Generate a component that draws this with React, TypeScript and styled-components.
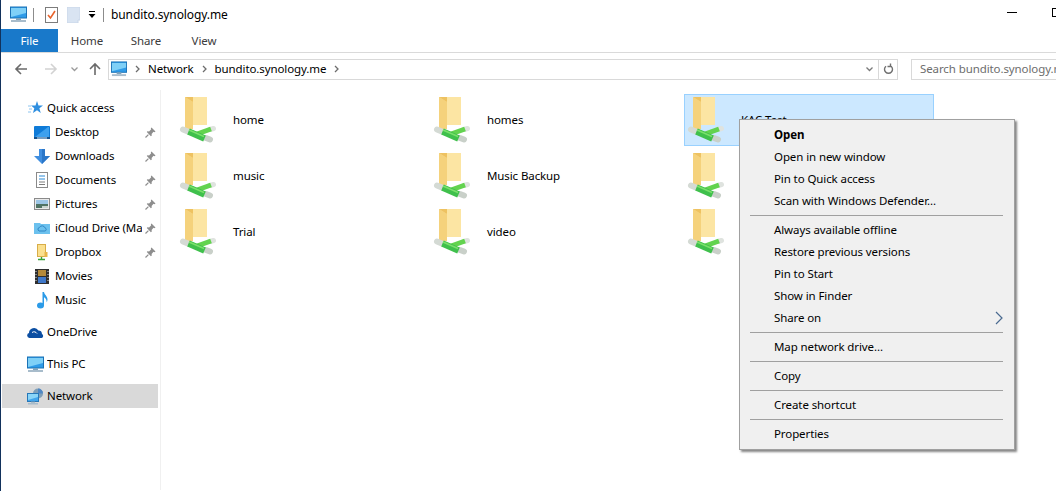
import styled, { createGlobalStyle } from "styled-components";

const GlobalStyle = createGlobalStyle`
  html, body {
    margin: 0;
    padding: 0;
    background: #ffffff;
    overflow: hidden;
  }
  * { box-sizing: border-box; }
`;

const Window = styled.div`
  position: relative;
  width: 1056px;
  height: 491px;
  overflow: hidden;
  background: #ffffff;
  border-left: 1px solid #12325c;
  color: #000000;
  font-family: "Noto Sans", "Open Sans", sans-serif;
  font-size: 11.5px;
  letter-spacing: -0.1px;
`;

const TitleBar = styled.div`
  display: flex;
  align-items: center;
  height: 29px;
  padding-left: 9px;
`;

const QuickSlot = styled.span<{ $ml: number }>`
  display: flex;
  margin-left: ${(p) => p.$ml}px;
`;

const TitleRule = styled.span<{ $ml: number }>`
  width: 1px;
  height: 14px;
  margin-left: ${(p) => p.$ml}px;
  background: #8c8c8c;
`;

const TitleText = styled.span`
  margin-left: 7px;
  padding-bottom: 1px;
  font-size: 12px;
`;

const WindowButtons = styled.div`
  display: flex;
  align-items: flex-start;
  margin-left: auto;
  height: 100%;
  padding-top: 12px;
`;

const MinimizeMark = styled.span`
  width: 10px;
  height: 1px;
  background: #000000;
`;

const MaximizeMark = styled.span`
  width: 10px;
  height: 9px;
  margin-left: 35px;
  margin-right: -6px;
  margin-top: -4px;
  border: 1px solid #000000;
`;

const Ribbon = styled.div`
  display: flex;
  height: 24px;
  border-bottom: 1px solid #dadada;
`;

const RibbonTab = styled.div<{ $active?: boolean; $width: number }>`
  width: ${(p) => p.$width}px;
  height: 23px;
  line-height: 23px;
  text-align: center;
  color: ${(p) => (p.$active ? "#ffffff" : "#3c3c3c")};
  background: ${(p) => (p.$active ? "#1979ca" : "transparent")};
`;

const NavRow = styled.div`
  display: flex;
  align-items: center;
  height: 37px;
  padding: 0 0 5px 13px;
`;

const NavButton = styled.span<{ $ml?: number }>`
  display: flex;
  margin-left: ${(p) => p.$ml ?? 0}px;
`;

const AddressBox = styled.div`
  display: flex;
  flex: none;
  align-items: center;
  width: 790px;
  height: 21px;
  margin-left: 6px;
  padding-left: 2px;
  border: 1px solid #d9d9d9;
`;

const CrumbIcon = styled.span`
  display: flex;
  margin-right: 8px;
`;

const Crumb = styled.span`
  margin: 0 8px;
  padding-bottom: 1px;
  white-space: nowrap;
`;

const AddressEnd = styled.div`
  display: flex;
  align-items: center;
  margin-left: auto;
  height: 100%;
`;

const RefreshCell = styled.span`
  display: flex;
  align-items: center;
  justify-content: center;
  width: 19px;
  height: 100%;
  margin-left: 5px;
  border-left: 1px solid #d9d9d9;
`;

const SearchBox = styled.div`
  flex: none;
  width: 160px;
  height: 21px;
  margin-left: 13px;
  padding-left: 8px;
  line-height: 18px;
  white-space: nowrap;
  color: #6d6d6d;
  border: 1px solid #d9d9d9;
`;

const Main = styled.div`
  display: flex;
  height: 400px;
`;

const Sidebar = styled.nav`
  flex: none;
  width: 160px;
  padding: 6px 0 0 1px;
  border-right: 1px solid #f0f0f0;
`;

const NavGroup = styled.div`
  margin-bottom: 8px;
`;

const TreeRow = styled.div<{ $child?: boolean; $selected?: boolean }>`
  display: flex;
  align-items: center;
  width: 156px;
  height: 24px;
  padding-left: ${(p) => (p.$child ? 31 : 25)}px;
  background: ${(p) => (p.$selected ? "#d9d9d9" : "transparent")};
`;

const TreeIcon = styled.span<{ $child?: boolean }>`
  display: flex;
  flex: none;
  justify-content: center;
  width: ${(p) => (p.$child ? 18 : 17)}px;
  margin-right: ${(p) => (p.$child ? 4 : 3)}px;
`;

const TreeLabel = styled.span`
  flex: 1;
  min-width: 0;
  padding-bottom: 1px;
  overflow: hidden;
  white-space: nowrap;
`;

const PinSlot = styled.span`
  display: flex;
  flex: none;
  margin: 0 2px 0 3px;
`;

const FileGrid = styled.section`
  display: grid;
  grid-template-columns: repeat(3, 250px);
  grid-auto-rows: 52px;
  gap: 4px;
  padding: 4px 0 0 15px;
`;

const Tile = styled.div<{ $selected?: boolean }>`
  display: flex;
  align-items: center;
  gap: 6px;
  padding-bottom: 1px;
  border: 1px solid ${(p) => (p.$selected ? "#99d1ff" : "transparent")};
  background: ${(p) => (p.$selected ? "#cce8ff" : "transparent")};
`;

const ContextMenu = styled.ul`
  position: absolute;
  left: 738px;
  top: 119px;
  width: 276px;
  height: 331px;
  margin: 0;
  padding: 4px 11px 0 10px;
  list-style: none;
  background: #f0f0f0;
  border: 1px solid #a0a0a0;
  box-shadow: 2px 2px 2px rgba(70, 70, 70, 0.65);
`;

const MenuItem = styled.li<{ $bold?: boolean }>`
  display: flex;
  align-items: center;
  justify-content: space-between;
  height: 22px;
  padding: 0 0 1px 24px;
  font-weight: ${(p) => (p.$bold ? 700 : 400)};
`;

const MenuRule = styled.li`
  height: 1px;
  margin: 3px 0 3px;
  background: #a0a0a0;
`;

const Monitor = ({ size = 17 }: { size?: number }) => (
  <svg width={size} height={size} viewBox="0 0 17 17">
    <rect x="0.5" y="1" width="16" height="11" fill="#2f9be8" stroke="#1b72b5" />
    <path d="M1 2h15v5L1 11z" fill="#7fd0f7" />
    <rect x="6" y="12" width="5" height="2" fill="#7fa3bd" />
    <rect x="1" y="14" width="15" height="2" fill="#a8bccb" />
  </svg>
);

const ClipboardCheck = () => (
  <svg width="13" height="16" viewBox="0 0 13 16">
    <rect x="0.5" y="0.5" width="12" height="15" fill="#ffffff" stroke="#7c7c7c" />
    <path d="M3 8l2.5 3L10 4" fill="none" stroke="#e8622a" strokeWidth="1.6" />
  </svg>
);

const PageBlank = () => (
  <svg width="13" height="16" viewBox="0 0 13 16">
    <path d="M0 0h13v13h-2v3H0z" fill="#d9e4f2" stroke="#c9d6e8" />
  </svg>
);

const DropLine = () => (
  <svg width="8" height="8" viewBox="0 0 8 8">
    <rect x="1" y="0" width="6" height="1" fill="#000000" />
    <path d="M0.5 3h7L4 7z" fill="#000000" />
  </svg>
);

const ArrowLeft = ({ color }: { color: string }) => (
  <svg width="14" height="14" viewBox="0 0 14 14">
    <path d="M13 7H2M7 2L2 7l5 5" fill="none" stroke={color} strokeWidth="1.6" />
  </svg>
);

const ArrowRight = ({ color }: { color: string }) => (
  <svg width="14" height="14" viewBox="0 0 14 14">
    <path d="M1 7h11M7 2l5 5-5 5" fill="none" stroke={color} strokeWidth="1.6" />
  </svg>
);

const ArrowUp = () => (
  <svg width="14" height="14" viewBox="0 0 14 14">
    <path d="M7 13V2M2 7l5-5 5 5" fill="none" stroke="#6a6a6a" strokeWidth="1.6" />
  </svg>
);

const SmallDown = ({ color = "#8f8f8f", w = 7 }: { color?: string; w?: number }) => (
  <svg width={w} height="6" viewBox="0 0 7 6">
    <path d="M0.5 1.5L3.5 4.5l3-3" fill="none" stroke={color} strokeWidth="1.3" />
  </svg>
);

const CrumbArrow = () => (
  <svg width="5" height="8" viewBox="0 0 5 8">
    <path d="M1 1l3 3-3 3" fill="none" stroke="#6d6d6d" strokeWidth="1.3" />
  </svg>
);

const Refresh = () => (
  <svg width="11" height="12" viewBox="0 0 11 12">
    <path d="M3 3.2a4 4 0 1 0 5 0M3.5 0.5v3h3" fill="none" stroke="#707070" strokeWidth="1.4" transform="matrix(-1 0 0 1 11 0)" />
  </svg>
);

const Pin = () => (
  <svg width="11" height="11" viewBox="0 0 11 11">
    <path d="M6.5 0.5l4 4-1 0.7-1-.4L6.6 6.9l.2 1.7-.9.6L1.8 5.1l.6-.9 1.7.2 2.1-2.1-.4-1z" fill="#8d8d8d" />
    <path d="M3.4 7.6L0.5 10.5" stroke="#8d8d8d" strokeWidth="1.2" />
  </svg>
);

const StarIcon = () => (
  <svg width="15" height="14" viewBox="0 0 15 14">
    <path d="M9 0l1.500 4.500H15l-3.600 2.800 1.300 4.700L9 9.300 5 12l1.300-4.700L3 4.500h4.500z" fill="#2f8fe0" />
    <path d="M0 5h3M1 8h3M0 11h3" stroke="#8cc4ef" strokeWidth="1" />
  </svg>
);

const DesktopIcon = () => (
  <svg width="16" height="13" viewBox="0 0 16 13">
    <rect width="16" height="13" rx="1" fill="#0f7bd8" />
    <path d="M1 11l13-10h1v10z" fill="#3da0ee" />
    <rect x="0" y="11" width="16" height="2" fill="#15508a" />
    <rect x="3" y="11.500" width="10" height="1" fill="#d8e8f5" />
  </svg>
);

const DownloadsIcon = () => (
  <svg width="16" height="15" viewBox="0 0 16 15">
    <path d="M5 0h6v7h5l-8 8-8-8h5z" fill="#3f8ee0" />
    <path d="M8 0h3v7h5l-8 8z" fill="#2b77c9" />
  </svg>
);

const DocumentsIcon = () => (
  <svg width="12" height="16" viewBox="0 0 12 16">
    <rect x="0.5" y="0.5" width="11" height="15" fill="#ffffff" stroke="#8a8a8a" />
    <path d="M3 4h6M3 7h6" stroke="#2b8ad6" />
    <path d="M3 10h6M3 12.500h6" stroke="#7d7d7d" />
  </svg>
);

const PicturesIcon = () => (
  <svg width="16" height="12" viewBox="0 0 16 12">
    <rect x="0.5" y="0.5" width="15" height="11" fill="#e9e9e9" stroke="#8a8a8a" />
    <rect x="2" y="2" width="12" height="4" fill="#9cc6e6" />
    <path d="M2 6h12v4H2z" fill="#4f7364" />
    <path d="M8 8h6v2H8z" fill="#c7d4cf" />
  </svg>
);

const CloudFolderIcon = () => (
  <svg width="16" height="12" viewBox="0 0 16 12">
    <path d="M0 1h6l1 1h9v10H0z" fill="#6cc1ee" />
    <path d="M5 9a2 2 0 0 1 .6-3.700 3 3 0 0 1 5.400.6A1.600 1.600 0 0 1 11 9z" fill="none" stroke="#2f86c4" />
  </svg>
);

const DropboxIcon = () => (
  <svg width="11" height="17" viewBox="0 0 11 17">
    <rect x="0.5" y="0.5" width="8" height="12" fill="#fbe08e" stroke="#d8ad48" />
    <rect x="7.500" y="8" width="3" height="5" fill="#e8b64a" />
    <path d="M4.500 13v2M1 15.500h7" stroke="#3aa33a" strokeWidth="1.4" />
  </svg>
);

const MoviesIcon = () => (
  <svg width="14" height="15" viewBox="0 0 14 15">
    <rect width="14" height="15" fill="#2f2f2f" />
    <rect x="3" y="1" width="8" height="6" fill="#b58a3a" />
    <rect x="3" y="8" width="8" height="6" fill="#3f78c9" />
    <path d="M1 2v1M1 5v1M1 8v1M1 11v1M13 2v1M13 5v1M13 8v1M13 11v1" stroke="#dddddd" />
  </svg>
);

const MusicIcon = () => (
  <svg width="11" height="17" viewBox="0 0 11 17">
    <ellipse cx="3.500" cy="13.500" rx="3.500" ry="3" fill="#2b9be8" />
    <path d="M5.500 13V0h1.500c.5 3 3.500 4 3.500 7.500 0 1-.3 2-.8 2.700.2-3-2-4.500-2.700-5V13z" fill="#2b9be8" />
  </svg>
);

const OneDriveIcon = () => (
  <svg width="17" height="11" viewBox="0 0 17 11">
    <path d="M2.500 11A2.500 2.500 0 0 1 2 6.100 5 5 0 0 1 11.400 3.600 3.600 3.600 0 0 1 15 7 2.200 2.200 0 0 1 14.600 11z" fill="#0b4ea2" />
    <path d="M5 5.500C7 4 9 5 10 6.500" stroke="#ffffff" fill="none" />
  </svg>
);

const NetworkIcon = () => (
  <svg width="17" height="17" viewBox="0 0 17 17">
    <circle cx="11" cy="5.500" r="5" fill="#7f9fb8" />
    <path d="M11 .5a5 5 0 0 1 5 5h-5z" fill="#4f87c4" />
    <rect x="0.5" y="5.500" width="11" height="8" fill="#41a5ec" stroke="#2677b8" />
    <path d="M1 6h10v3L1 12z" fill="#8ad5f8" />
    <rect x="4" y="13.500" width="4" height="1" fill="#7fa3bd" />
    <rect x="1" y="15" width="10" height="1.500" fill="#a8bccb" />
  </svg>
);

const SharedFolder = () => (
  <svg width="50" height="50" viewBox="0 0 50 50">
    <rect x="8" y="2" width="22" height="28" fill="#fce5a3" />
    <path d="M8 2l8 5v27H8z" fill="#f5d27c" />
    <path d="M8 2h8v5z" fill="#eec261" />
    <g fill="none">
      <path d="M6 34.500l6 2.500" stroke="#d4dad4" strokeWidth="6" strokeLinecap="round" />
      <path d="M33 34.500l3.500-1" stroke="#dfe3df" strokeWidth="5" strokeLinecap="round" />
      <path d="M29 43l4 1.500" stroke="#c9d0c9" strokeWidth="6" strokeLinecap="round" />
      <path d="M20 39l14-5" stroke="#63d34f" strokeWidth="5" />
      <path d="M11.500 36.500l16 7" stroke="#3fc04c" strokeWidth="6.500" />
      <path d="M12 35l15 6.500" stroke="#7ae06a" strokeWidth="1.500" />
    </g>
  </svg>
);

const MenuChevron = () => (
  <svg width="8" height="14" viewBox="0 0 8 14">
    <path d="M1 1l6 6-6 6" fill="none" stroke="#4a6a90" strokeWidth="1.200" />
  </svg>
);

const quickItems = [
  { label: "Desktop", icon: <DesktopIcon />, pinned: true },
  { label: "Downloads", icon: <DownloadsIcon />, pinned: true },
  { label: "Documents", icon: <DocumentsIcon />, pinned: true },
  { label: "Pictures", icon: <PicturesIcon />, pinned: true },
  { label: "iCloud Drive (Mac)", icon: <CloudFolderIcon />, pinned: true },
  { label: "Dropbox", icon: <DropboxIcon />, pinned: true },
  { label: "Movies", icon: <MoviesIcon />, pinned: false },
  { label: "Music", icon: <MusicIcon />, pinned: false },
];

const shares = ["home", "homes", "KAC Test", "music", "Music Backup", "", "Trial", "video", ""];

const menuGroups = [
  ["Open", "Open in new window", "Pin to Quick access", "Scan with Windows Defender..."],
  ["Always available offline", "Restore previous versions", "Pin to Start", "Show in Finder", "Share on"],
  ["Map network drive..."],
  ["Copy"],
  ["Create shortcut"],
  ["Properties"],
];

export default function App() {
  return (
    <Window>
      <GlobalStyle />
      <TitleBar>
        <QuickSlot $ml={0}>
          <Monitor />
        </QuickSlot>
        <TitleRule $ml={6} />
        <QuickSlot $ml={11}>
          <ClipboardCheck />
        </QuickSlot>
        <QuickSlot $ml={9}>
          <PageBlank />
        </QuickSlot>
        <QuickSlot $ml={8}>
          <DropLine />
        </QuickSlot>
        <TitleRule $ml={7} />
        <TitleText>bundito.synology.me</TitleText>
        <WindowButtons>
          <MinimizeMark />
          <MaximizeMark />
        </WindowButtons>
      </TitleBar>

      <Ribbon>
        <RibbonTab $active $width={57}>File</RibbonTab>
        <RibbonTab $width={58}>Home</RibbonTab>
        <RibbonTab $width={60}>Share</RibbonTab>
        <RibbonTab $width={56}>View</RibbonTab>
      </Ribbon>

      <NavRow>
        <NavButton>
          <ArrowLeft color="#6a6a6a" />
        </NavButton>
        <NavButton $ml={16}>
          <ArrowRight color="#d2d2d2" />
        </NavButton>
        <NavButton $ml={13}>
          <SmallDown color="#9a9a9a" />
        </NavButton>
        <NavButton $ml={10}>
          <ArrowUp />
        </NavButton>
        <AddressBox>
          <CrumbIcon>
            <Monitor size={16} />
          </CrumbIcon>
          <CrumbArrow />
          <Crumb>Network</Crumb>
          <CrumbArrow />
          <Crumb>bundito.synology.me</Crumb>
          <CrumbArrow />
          <AddressEnd>
            <SmallDown color="#7a7a7a" />
            <RefreshCell>
              <Refresh />
            </RefreshCell>
          </AddressEnd>
        </AddressBox>
        <SearchBox>Search bundito.synology.me</SearchBox>
      </NavRow>

      <Main>
        <Sidebar>
          <NavGroup>
            <TreeRow>
              <TreeIcon>
                <StarIcon />
              </TreeIcon>
              <TreeLabel>Quick access</TreeLabel>
            </TreeRow>
            {quickItems.map((item) => (
              <TreeRow $child key={item.label}>
                <TreeIcon $child>{item.icon}</TreeIcon>
                <TreeLabel>{item.label}</TreeLabel>
                {item.pinned && (
                  <PinSlot>
                    <Pin />
                  </PinSlot>
                )}
              </TreeRow>
            ))}
          </NavGroup>
          <NavGroup>
            <TreeRow>
              <TreeIcon>
                <OneDriveIcon />
              </TreeIcon>
              <TreeLabel>OneDrive</TreeLabel>
            </TreeRow>
          </NavGroup>
          <NavGroup>
            <TreeRow>
              <TreeIcon>
                <Monitor />
              </TreeIcon>
              <TreeLabel>This PC</TreeLabel>
            </TreeRow>
          </NavGroup>
          <TreeRow $selected>
            <TreeIcon>
              <NetworkIcon />
            </TreeIcon>
            <TreeLabel>Network</TreeLabel>
          </TreeRow>
        </Sidebar>

        <FileGrid>
          {shares.map((name, i) => (
            <Tile key={i} $selected={name === "KAC Test"}>
              <SharedFolder />
              {name}
            </Tile>
          ))}
        </FileGrid>
      </Main>

      <ContextMenu>
        {menuGroups.map((group, g) => (
          <div key={g}>
            {g > 0 && <MenuRule />}
            {group.map((label) => (
              <MenuItem key={label} $bold={label === "Open"}>
                {label}
                {label === "Share on" && <MenuChevron />}
              </MenuItem>
            ))}
          </div>
        ))}
      </ContextMenu>
    </Window>
  );
}
